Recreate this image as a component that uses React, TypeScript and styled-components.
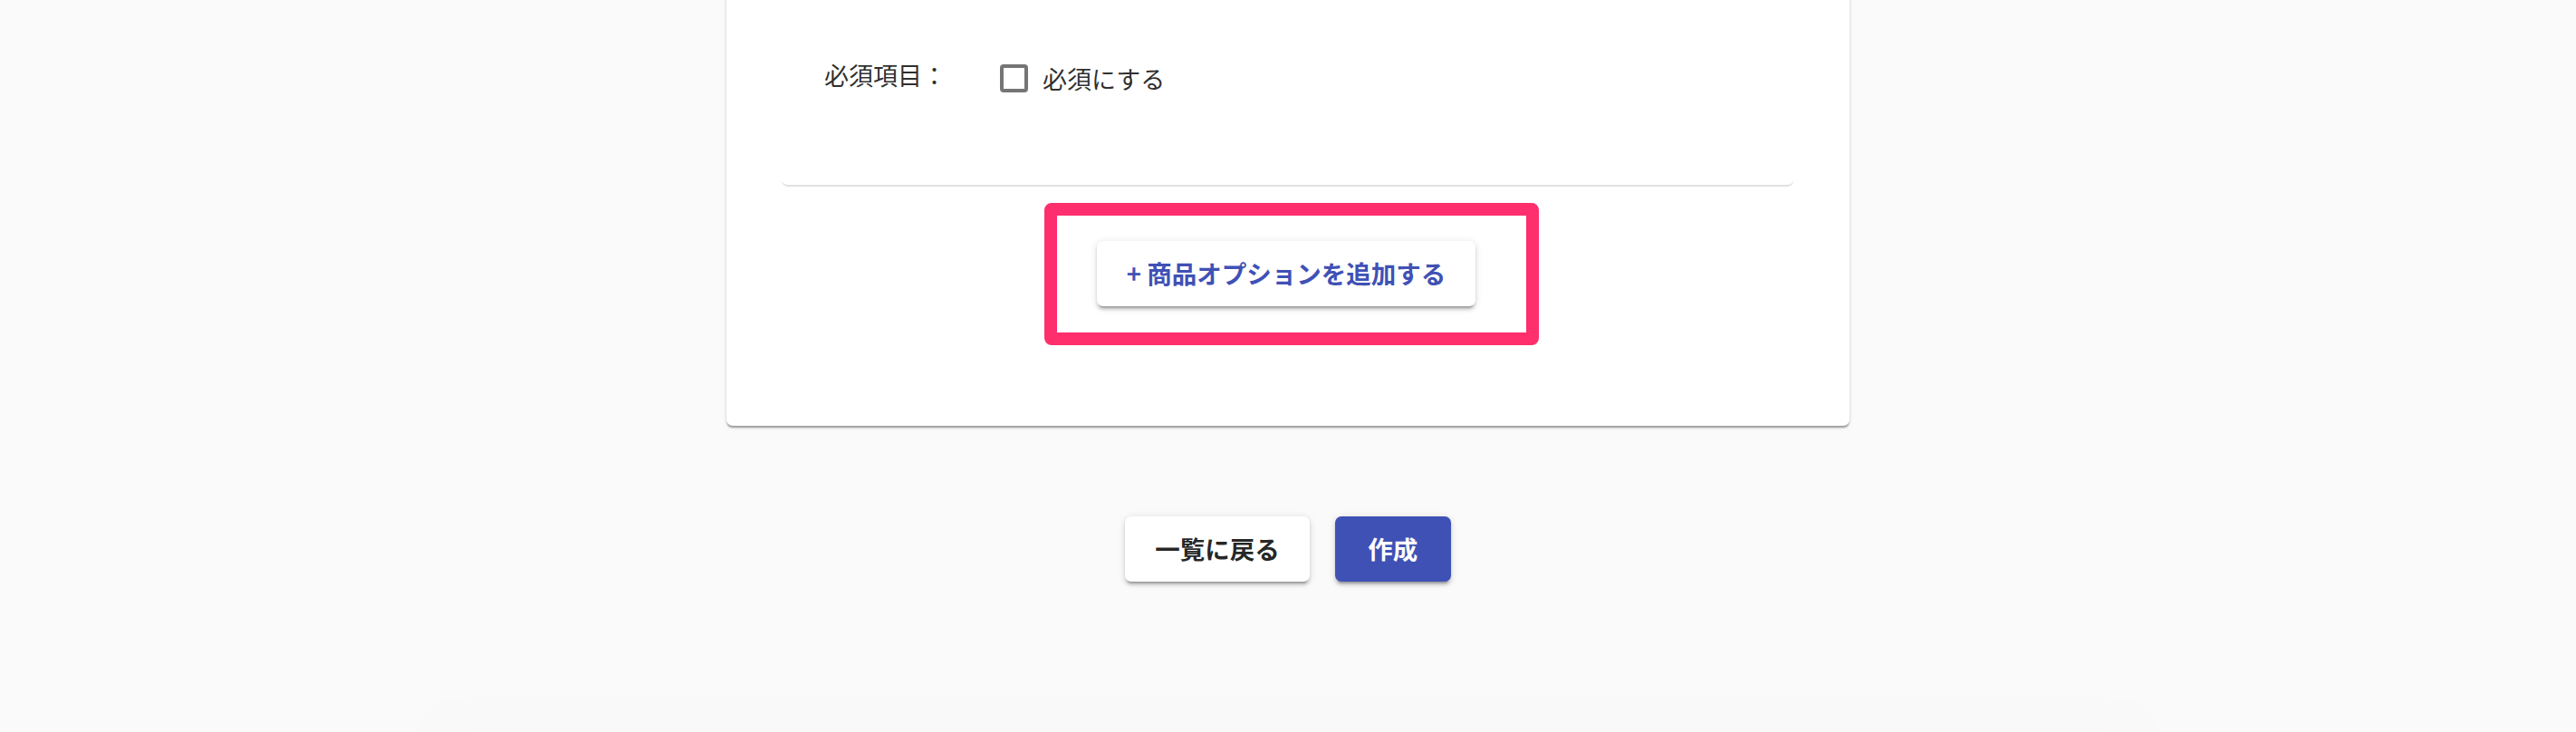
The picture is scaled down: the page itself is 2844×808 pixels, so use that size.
import React from "react";
import styled, { createGlobalStyle } from "styled-components";

const GlobalStyle = createGlobalStyle`
  html, body {
    margin: 0;
    padding: 0;
    background: #fafafa;
    overflow: hidden;
  }
  body {
    font-family: "Noto Sans CJK JP", "Noto Sans", Roboto, sans-serif;
    color: rgba(0, 0, 0, 0.87);
  }
`;

const Page = styled.div`
  height: 808px;
  overflow: hidden;
  display: flex;
  flex-direction: column;
  align-items: center;
  background: #fafafa;
`;

const Card = styled.div`
  width: 1240px;
  margin-top: -60px;
  padding: 0 61px 89px 60px;
  box-sizing: border-box;
  background: #fff;
  border-radius: 7px;
  box-shadow: 0 3.6px 1.8px -1.8px rgba(0, 0, 0, 0.22),
    0 1.8px 1.8px 0 rgba(0, 0, 0, 0.14), 0 1.8px 5.4px 0 rgba(0, 0, 0, 0.1);
  display: flex;
  flex-direction: column;
  align-items: center;
`;

const Section = styled.div`
  align-self: stretch;
  padding: 123px 48px 95px;
  background: #fff;
  border-radius: 0 0 8px 8px;
  box-shadow: 0 3px 1.5px -1px rgba(0, 0, 0, 0.13);
`;

const FieldRow = styled.div`
  height: 46px;
  display: flex;
  align-items: center;
`;

const FieldLabel = styled.span`
  width: 194px;
  flex: none;
  font-size: 27px;
  line-height: 1;
  padding-bottom: 7px;
  color: rgba(0, 0, 0, 0.84);
`;

const CheckLabel = styled.label`
  display: flex;
  align-items: center;
  gap: 16px;
  font-size: 27px;
  line-height: 1;
  color: rgba(0, 0, 0, 0.84);
`;

const CheckBox = styled.span`
  width: 31px;
  height: 31px;
  box-sizing: border-box;
  border: 4px solid #757575;
  border-radius: 4px;
  flex: none;
`;

const Highlight = styled.div`
  margin-top: 20px;
  margin-left: 9px;
  padding: 28px 56px 29px 44px;
  border: 14px solid #ff2e6c;
  border-radius: 8px;
  display: flex;
`;

const Button = styled.button<{ $variant?: "primary" | "default" | "link" }>`
  height: 72px;
  min-width: 128px;
  padding: 0 33px;
  box-sizing: border-box;
  border: none;
  border-radius: 7px;
  font-family: "Noto Sans CJK JP", "Noto Sans", Roboto, sans-serif;
  font-size: 27.5px;
  font-weight: 700;
  line-height: 1;
  white-space: nowrap;
  display: inline-flex;
  align-items: center;
  justify-content: center;
  cursor: pointer;
  background: ${(p) => (p.$variant === "primary" ? "#3f51b5" : "#fff")};
  color: ${(p) =>
    p.$variant === "primary"
      ? "#fff"
      : p.$variant === "link"
      ? "#3f51b5"
      : "rgba(0, 0, 0, 0.87)"};
  box-shadow: 0 5.4px 1.8px -3.6px rgba(0, 0, 0, 0.2),
    0 3.6px 3.6px 0 rgba(0, 0, 0, 0.14), 0 1.8px 9px 0 rgba(0, 0, 0, 0.12);
`;

const Actions = styled.div`
  margin-top: 100px;
  display: flex;
  gap: 28px;
`;

const FooterShade = styled.div`
  margin-top: auto;
  width: 1880px;
  height: 0;
  box-shadow: 0 0 60px 20px rgba(0, 0, 0, 0.014);
`;

export default function App() {
  return (
    <>
      <GlobalStyle />
      <Page>
        <Card>
          <Section>
            <FieldRow>
              <FieldLabel>必須項目：</FieldLabel>
              <CheckLabel>
                <CheckBox />
                必須にする
              </CheckLabel>
            </FieldRow>
          </Section>
          <Highlight>
            <Button $variant="link">+ 商品オプションを追加する</Button>
          </Highlight>
        </Card>
        <Actions>
          <Button>一覧に戻る</Button>
          <Button $variant="primary">作成</Button>
        </Actions>
        <FooterShade />
      </Page>
    </>
  );
}
